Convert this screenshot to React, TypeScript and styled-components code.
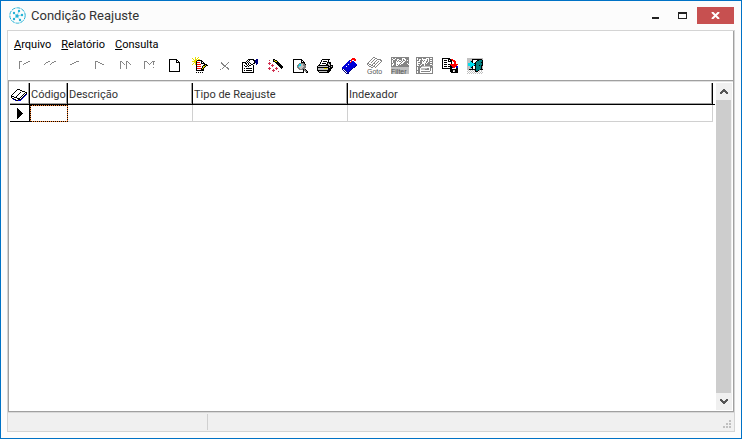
import React from "react";
import styled, { createGlobalStyle, css } from "styled-components";

const GlobalStyle = createGlobalStyle`
  * { box-sizing: border-box; }
  body { margin: 0; font-family: Roboto, "Open Sans", sans-serif; font-size: 11px; color: #000; }
  button { font: inherit; color: inherit; border: 0; padding: 0; background: none; }
`;

const Window = styled.div`
  display: flex;
  flex-direction: column;
  min-height: 100vh;
  padding: 0 6px 6px;
  border: 1px solid #0072c6;
  background: #fcfcfc;
`;

const TitleBar = styled.header`
  display: flex;
  align-items: center;
  height: 29px;
  padding-left: 2px;
  gap: 5px;
`;

const Title = styled.h1`
  flex: 1;
  margin: 0;
  font-size: 13px;
  font-weight: 400;
  line-height: 20px;
  color: #333;
`;

const WindowButtons = styled.div`
  display: flex;
  align-items: center;
  padding-right: 1px;
`;

const WindowButton = styled.button<{ $close?: boolean }>`
  display: grid;
  place-items: center;
  width: ${(p) => (p.$close ? 37 : 27)}px;
  height: 17px;
  margin-left: ${(p) => (p.$close ? 1 : 0)}px;
  background: ${(p) => (p.$close ? "#c75050" : "transparent")};
`;

const Client = styled.main`
  display: flex;
  flex: 1;
  flex-direction: column;
  border: 1px solid #d4d4d4;
  background: #fff;
`;

const Tools = styled.section`
  height: 49px;
  border-right: 1px solid #a0a0a0;
`;

const MenuBar = styled.nav`
  display: flex;
  gap: 10px;
  padding: 5px 6px 0;
`;

const MenuItem = styled.button`
  height: 18px;
  line-height: 18px;
  white-space: nowrap;
  &::first-letter { text-decoration: underline; }
`;

const ToolBar = styled.div`
  display: flex;
  padding: 0 4px;
`;

const ToolButton = styled.button`
  display: grid;
  place-items: center;
  width: 25px;
  height: 23px;
  svg { overflow: visible; }
`;

const GridPane = styled.section`
  display: flex;
  flex: 1;
  border: 1px solid #a0a0a0;
  box-shadow: inset 0 1px #e0e0e0, 0 1px #d9d9d9;
  padding: 2px 1px 1px;
`;

const GridArea = styled.div`
  flex: 1;
`;

const Table = styled.table`
  width: 100%;
  table-layout: fixed;
  border-collapse: separate;
  border-spacing: 0;
`;

const HeadCell = styled.th<{ $width?: number }>`
  width: ${(p) => (p.$width ? `${p.$width}px` : "auto")};
  height: 22px;
  padding: 2px 0 0 1px;
  border-right: 1px solid #000;
  border-bottom: 1px solid #000;
  box-shadow: inset -1px -1px #a0a0a0;
  font-weight: 400;
  line-height: 18px;
  text-align: left;
  color: #333;
  white-space: nowrap;
  svg { display: block; }
`;

const EndCell = styled.th`
  width: 2px;
  padding: 0;
  border-bottom: 1px solid #000;
`;

const Cell = styled.td<{ $selected?: boolean }>`
  height: 17px;
  padding: 0;
  border: 0 solid #d0d0d0;
  border-width: 0 1px 1px 0;
  ${(p) =>
    p.$selected &&
    css`
      border-width: 0;
      outline: 1px dotted #000;
      outline-offset: -1px;
      box-shadow: inset 0 0 0 1px #ff8c3c;
    `}
`;

const Marker = styled.td`
  padding: 0 0 0 7px;
  border-right: 1px solid #000;
  border-bottom: 1px solid #000;
  svg { display: block; }
`;

const ScrollBar = styled.div`
  display: flex;
  flex-direction: column;
  width: 16px;
  margin-left: 1px;
  background: #f0f0f0;
`;

const ScrollButton = styled.button`
  display: grid;
  place-items: center;
  height: 17px;
`;

const ScrollThumb = styled.div`
  flex: 1;
  margin-right: 1px;
  background: #cdcdcd;
`;

const StatusBar = styled.footer`
  display: flex;
  height: 18px;
  margin-top: 1px;
  padding: 1px;
  background: #f0f0f0;
`;

const StatusPanel = styled.div`
  width: 199px;
  border-right: 1px solid #d0d0d0;
`;

const Grip = styled.div`
  display: flex;
  flex: 1;
  align-items: flex-end;
  justify-content: flex-end;
`;

const colors: Record<string, string> = {
  k: "#000", g: "#808080", l: "#c0c0c0", w: "#fff", y: "#e8dc00", r: "#ff0000",
  b: "#0000d8", n: "#000080", t: "#008080", c: "#00e0f0", s: "#858585", d: "#555", m: "#d03050",
};

function PixelArt({ rows, children }: { rows: string[]; children?: React.ReactNode }) {
  const width = Math.max(...rows.map((r) => r.length));
  return (
    <svg width={width} height={rows.length} shapeRendering="crispEdges" aria-hidden="true">
      {rows.flatMap((row, y) =>
        [...row.matchAll(/([a-z])\1*/g)].map((run) => (
          <rect key={`${run.index}-${y}`} x={run.index} y={y} width={run[0].length} height={1} fill={colors[run[1]]} />
        )),
      )}
      {children}
    </svg>
  );
}

const blank = "................";
const pad = (rows: string[], top: number) => [
  ...Array(top).fill(blank), ...rows, ...Array(17 - top - rows.length).fill(blank),
];

const tools: { name: string; rows: string[]; label?: string }[] = [
  { name: "Primeiro", rows: pad(["..sss......ss...", "..s......ss.....", "..s....ss.......", "..s...s.........", "..s.............", "..s.............", "..s.............", "..s............."], 4) },
  { name: "Página anterior", rows: pad(["......ss....ss..", "....ss....ss....", "...s.....s......", "..s.....s......."], 4) },
  { name: "Anterior", rows: pad([".........sss....", ".......ss.......", ".....ss.........", "...ss..........."], 4) },
  { name: "Próximo", rows: pad(["...sss..........", "...s..ss........", "...s....ss......", "...s......ss....", "...s............", "...s............", "...s............", "...s............"], 4) },
  { name: "Próxima página", rows: pad(["...ss....ss.....", "...s.s...s.s....", "...s..s..s..s...", "...s...s.s...s..", "...s.....s......", "...s.....s......", "...s.....s......", "...s.....s......"], 4) },
  { name: "Último", rows: pad(["..sss.....sss...", "..s..s...s.s....", "..s...s.s..s....", "..s....s...s....", "..s.............", "..s.............", "..s........s....", "..s............."], 4) },
  { name: "Novo", rows: pad(["..kkkkkkkk......", "..k......kk.....", "..k......k.k....", "..k......kkkk...", "..k.........k...", "..k.........k...", "..k.........k...", "..k.........k...", "..k.........k...", "..k.........k...", "..k.........k...", "..k.........k...", "..kkkkkkkkkkk..."], 2) },
  { name: "Editar", rows: ["...y..y.........", "y..y.y..........", ".y.yy.yy........", "..yyykkkkk......", "yyyykwwwwkk.....", "..yykrrrwkwk....", ".y.ykwwwwkkkk...", "y..ykrrrrwwwkkk.", "....kwwwwwwkkykk", "....krrrrwkyyk..", "....kwwwwwkyk...", "....krrrrkyk....", "....kwwwwkkk....", "....kkkkkkkk....", blank, "....k.k.k.k.....", blank] },
  { name: "Excluir", rows: pad(["....s......s....", "....ss....s.....", ".....ss..s......", "......sss.......", ".......ss.......", "......s..ss.....", ".....s....ss....", "...s.......s...."], 5) },
  { name: "Propriedades", rows: pad(["......kkkkkk..nn", ".....kwkwwwkknnn", "....kwkwwwwwknnn", "kkkkwkwkwwwwknnn", "kwwkkwkwkwwkk.nn", "kwwwkwkwwkk...n.", "kwkwwkwkkwwk....", "kwwkkwkwwwwk....", "kwwwwwwwwwwk....", "kwkwkkkkkkwk....", "kwwwwwwwwwwk....", "kwkwkkkkkkwk....", "kwwwwwwwwwwk....", "kkkkkkkkkkkk...."], 2) },
  { name: "Assistente", rows: pad(["......kk........", "..m...kykk......", "......kkyyk.....", "..m.....kkkk....", ".mmm.....kkkk...", "..m..m....kkkk..", "....mmm....kkkk.", ".....m......kkkk", "..m......m...kkk", ".mmm....mmm...k.", "..m...m..m......", ".....mmm........", "......m....m...."], 2) },
  { name: "Visualizar", rows: pad([".kkkkkkkkk......", ".kwwwwwwwkk.....", ".kwwwwwwwkwk....", ".kwwwwwwwkkkk...", ".kwwwwwgggggk...", ".kwwwwgccllggk..", ".kwwwggccllggg..", ".kwwwgclllllgg..", ".kwwwggllllggg..", ".kwwwwggllggg...", ".kwwwwwggggkgk..", ".kwwwwwwwwwkggk.", ".kwwwwwwwwwk.ggk", ".kkkkkkkkkkk..kk"], 2) },
  { name: "Imprimir", rows: pad([".....kkkkkkkk...", "....kwwwwwwk....", "....kwkkkkwk....", "...kwwwwwwkkkk..", "...kwkkkkwklkk..", "..kwwwwwwkkllk..", ".kkkkkkkkkkklkkk", "kllllllllllkkklk", "kkkkkkkkkkkklkkk", "kllllllyyylkkkk.", "kllllllllllkkk..", "kkkkkkkkkkkkkk..", ".kllllllllkkk...", "..kkkkkkkkkk...."], 2) },
  { name: "Marcador", rows: pad(["..........rrr...", ".........rrrrr..", ".......bbr..rr..", "......bbwrbb....", ".....bbbrbbbb...", "....bbbbbbbbbb..", "...bbbwbbbbbbbb.", "..bbbbbbbbbbbbnw", ".bbbwbbbbbbbbnw.", "bbbbbbbbbbbbnw..", "nbbbbbbbbbnw....", "nwnbbbbbbnw.....", ".nwnbbbbnw......", "..nwnbbnw.......", "...nwnnw........", "....nnn........."], 1) },
  { name: "Ir para", label: "Goto", rows: pad(["......ss........", ".....s..ss......", "....s..s..ssss..", "...s..s..s...ss.", "..s..s..s..s..s.", ".s..s..s..s..s..", "ss....ss.s..s...", "s.ss.s..s..s....", ".s..ss.s..s.....", "..ss..ss.s......", "....ss..s......."], 0) },
  { name: "Filtrar", label: "Filter", rows: ["ssssssssssssssssss", "s.ss.ssssss...ssss", "ss..ss..sss.s..sss", "s.ssss.s..s.ss.s.s", "s.sss.s.ss.s..ssss", "s.sss.....s..sssss", "ss.ss....s..ssss.s", "s..ss.s.s.sssssss.", "s.sss..sssssssssss", "ssssssssssssssssss", "llllllllllllllllll", "llllllllllllllllll", "llllllllllllllllll", "llllllllllllllllll", "llllllllllllllllll", "llllllllllllllllll", "llllllllllllllllll"] },
  { name: "Localizar", rows: ["sssssssssssssssss", "s.ssss.sss...s..s", "s.s..s.....s.ssss", "sss.sss.s..s.s..s", "s...ss.s..ss.ssss", "s.ssss....s.ss..s", "s...ss...s.ssssss", "s.sss.ss.sssss..s", "s..s.sss.sssssssl", "ssssssllllllllsss", "s.sss.........sss", "s.ss.llllllss.s.s", "s.ss.llllssss.s.s", "ssss..........s.s", "s.ss.sssssssss..s", "s.ss............s", "sssssssssssssssss"] },
  { name: "Salvar", rows: pad(["kkkkkkkk........", "kwwwwwkkkrr.....", "kwkkkwkwkkrrr...", "kwwwwwkkkk.rrr..", "kwkkkwwwwk..rr..", "kwwwwwwwwk..rr..", "kwkkkwkkrrrrrrrr", "kwwwwwwwkrrrrrr.", "kwkkkwkkkkrrrrnb", "kwwwwwwwkknrrwnb", "kkkkkkkkkkwwwwkk", "........kkkkkkkk", "........kkkllkkk", "........kkkwlkkk", ".........kkkkkkk"], 1) },
  { name: "Sair", rows: pad(["llllllllllllllll", "lllllkkkkkkkkkkl", "lllllkwwwwkktttk", "lllckkwwwktttttk", "lllcckwwktttttkk", "lcccccckkttttttk", "lccccccckttttttk", "lcccccckktttktkk", "lllcckwwktttttkl", "lllckkwwktttttkl", "lllllkwwktttttkl", "llkkkkkkkttttkkk", ".l.l.l.lkttkl.l.", "l.l.l.l.kkk.l.l.", ".l.l.l.l.l.l.l.l", "l.l.l.l.l.l.l.l."], 1) },
];

const bookRows = [
  "......kkk.......", ".....kwwwkk.....", "....kwwwwwwkkk..", "...kwwwwwkwwwwkk", "..kwwwwwkwwwwkwk", ".kwwwwwkwwwwkwkb", "kwwwwwkwwwwkwkb.", "kkkwwkwwwwkwkb..", "kwwkkkwwwkwkb...", ".kkwwwkkkwkb....", "..bkkwwkkkb.....", "....bkkbbb......",
];
const arrowRows = ["k.....", "kk....", "kkk...", "kkkk..", "kkkkk.", "kkkkkk", "kkkkk.", "kkkk..", "kkk...", "kk....", "k....."];
const chevronUp = ["...dd...", "..dddd..", ".dddddd.", "ddd..ddd", "dd....dd"];

const columns: { title: string; width?: number }[] = [
  { title: "Código", width: 38 },
  { title: "Descrição", width: 125 },
  { title: "Tipo de Reajuste", width: 155 },
  { title: "Indexador" },
];

function AppIcon() {
  const nodes = [[5, 6], [10, 4], [13, 8], [11, 13], [5, 12]];
  return (
    <svg width="17" height="17" viewBox="0 0 17 17" fill="none" stroke="#22b2d6" aria-hidden="true">
      <circle cx="8.5" cy="8.5" r="7.7" strokeDasharray="4 1" />
      {nodes.map(([x, y]) => (
        <g key={`${x}-${y}`}>
          <path d={`M8 9L${x} ${y}`} strokeWidth=".4" />
          <circle cx={x} cy={y} r="1.2" fill="#22b2d6" stroke="none" />
        </g>
      ))}
      <circle cx="8" cy="9" r="1.7" fill="#22b2d6" stroke="none" />
    </svg>
  );
}

export default function App() {
  return (
    <Window>
      <GlobalStyle />
      <TitleBar>
        <AppIcon />
        <Title>Condição Reajuste</Title>
        <WindowButtons>
          <WindowButton aria-label="Minimizar">
            <svg width="7" height="7"><path d="M0 5h7v2H0z" fill="#222" /></svg>
          </WindowButton>
          <WindowButton aria-label="Maximizar">
            <svg width="9" height="7" shapeRendering="crispEdges"><path d="M0 0h9v7H0zM1 2v4h7V2z" fill="#222" fillRule="evenodd" /></svg>
          </WindowButton>
          <WindowButton $close aria-label="Fechar">
            <svg width="9" height="7"><path d="M1 0L8 7M8 0L1 7" stroke="#fff" strokeWidth="2" /></svg>
          </WindowButton>
        </WindowButtons>
      </TitleBar>
      <Client>
        <Tools>
          <MenuBar>
            {["Arquivo", "Relatório", "Consulta"].map((m) => <MenuItem key={m}>{m}</MenuItem>)}
          </MenuBar>
          <ToolBar role="toolbar">
            {tools.map((t) => (
              <ToolButton key={t.name} aria-label={t.name}>
                <PixelArt rows={t.rows}>
                  {t.label && (
                    <text x="0" y="17" fontSize="7" fontFamily="Liberation Sans, sans-serif" fill="#555">{t.label}</text>
                  )}
                </PixelArt>
              </ToolButton>
            ))}
          </ToolBar>
        </Tools>
        <GridPane>
          <GridArea>
            <Table>
              <thead>
                <tr>
                  <HeadCell $width={20} aria-label="Registro"><PixelArt rows={bookRows} /></HeadCell>
                  {columns.map((c) => <HeadCell key={c.title} $width={c.width}>{c.title}</HeadCell>)}
                  <EndCell />
                </tr>
              </thead>
              <tbody>
                <tr>
                  <Marker><PixelArt rows={arrowRows} /></Marker>
                  {columns.map((c, i) => <Cell key={c.title} $selected={i === 0} />)}
                  <td />
                </tr>
              </tbody>
            </Table>
          </GridArea>
          <ScrollBar>
            <ScrollButton aria-label="Rolar para cima"><PixelArt rows={chevronUp} /></ScrollButton>
            <ScrollThumb />
            <ScrollButton aria-label="Rolar para baixo"><PixelArt rows={[...chevronUp].reverse()} /></ScrollButton>
          </ScrollBar>
        </GridPane>
        <StatusBar>
          <StatusPanel />
          <Grip>
            <svg width="10" height="10" fill="#c0c0c0" aria-hidden="true">
              <path d="M6 0h2v2H6zM3 3h2v2H3zM6 3h2v2H6zM0 6h2v2H0zM3 6h2v2H3zM6 6h2v2H6z" />
            </svg>
          </Grip>
        </StatusBar>
      </Client>
    </Window>
  );
}
